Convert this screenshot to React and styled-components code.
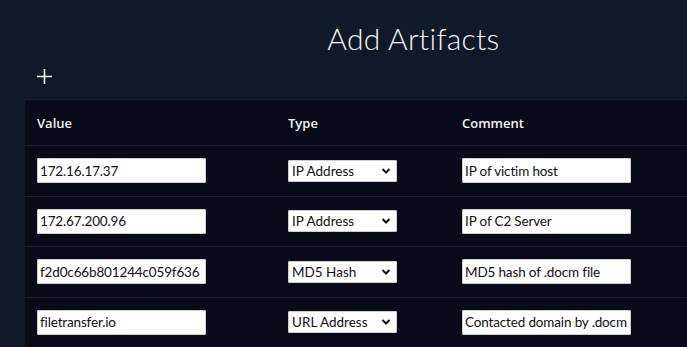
import React from 'react';
import styled, { createGlobalStyle } from 'styled-components';

const artifacts = [
  { value: '172.16.17.37', type: 'IP Address', comment: 'IP of victim host' },
  { value: '172.67.200.96', type: 'IP Address', comment: 'IP of C2 Server' },
  { value: 'f2d0c66b801244c059f636', type: 'MD5 Hash', comment: 'MD5 hash of .docm file' },
  { value: 'filetransfer.io', type: 'URL Address', comment: 'Contacted domain by .docm' },
];

const TYPES = ['IP Address', 'MD5 Hash', 'URL Address'];

const Chevron = () => (
  <svg width="10" height="8" viewBox="0 0 10 8">
    <path d="M1.5 2 L5 5.5 L8.5 2" fill="none" stroke="#111" strokeWidth="2" />
  </svg>
);

function App() {
  return (
    <>
      <Global />
      <Page>
        <Title>Add Artifacts</Title>
        <AddButton aria-label="add">
          <svg width="17" height="17" viewBox="0 0 17 17">
            <path d="M8.5 1 V16 M1 8.5 H16" stroke="#f3f4f6" strokeWidth="1.6" />
          </svg>
        </AddButton>
        <Table>
          <colgroup>
            <col style={{ width: 251 }} />
            <col style={{ width: 174 }} />
            <col />
          </colgroup>
          <thead>
            <tr>
              <Th>Value</Th>
              <Th>Type</Th>
              <Th>Comment</Th>
            </tr>
          </thead>
          <tbody>
            {artifacts.map((a, i) => (
              <Row key={i}>
                <Td><TextInput defaultValue={a.value} /></Td>
                <Td>
                  <SelectWrap>
                    <Select defaultValue={a.type}>
                      {TYPES.map(t => <option key={t}>{t}</option>)}
                    </Select>
                    <Arrow><Chevron /></Arrow>
                  </SelectWrap>
                </Td>
                <Td><TextInput defaultValue={a.comment} /></Td>
              </Row>
            ))}
          </tbody>
        </Table>
      </Page>
    </>
  );
}

export default App;

const Global = createGlobalStyle`
  html, body {
    margin: 0;
    background: #111827;
    overflow: hidden;
  }
`;

const Page = styled.div`
  width: 777px;
  padding-left: 25px;
  padding-top: 20px;
`;

const Title = styled.h1`
  margin: 0;
  text-align: center;
  font-family: Lato, "Noto Sans", sans-serif;
  font-weight: 300;
  font-size: 30px;
  line-height: 36px;
  color: #f3f4f6;
  letter-spacing: 0.3px;
`;

const AddButton = styled.button`
  display: flex;
  background: none;
  border: none;
  padding: 0;
  margin: 12px 0 0 11px;
  height: 31px;
  cursor: pointer;
`;

const Table = styled.table`
  width: 100%;
  border-collapse: collapse;
  table-layout: fixed;
  background: #080a17;
  border-top: 1px solid #1a2030;
`;

const Th = styled.th`
  text-align: left;
  padding: 0 12px;
  height: 45px;
  font-family: "Open Sans", sans-serif;
  font-weight: 600;
  font-size: 13px;
  color: #f3f4f6;
  border-bottom: 1px solid #1c2233;
`;

const Row = styled.tr`
  border-bottom: 1px solid #1c2233;
`;

const Td = styled.td`
  padding: 12px 12px 12.5px;
  vertical-align: middle;
`;

const TextInput = styled.input`
  box-sizing: border-box;
  width: 169px;
  height: 25px;
  padding: 0 2px;
  border: 1px solid #cfcfcf;
  border-radius: 1px;
  background: #fff;
  font-family: Lato, "Noto Sans", sans-serif;
  font-size: 13.5px;
  letter-spacing: -0.15px;
  color: #111;
  outline: none;
`;

const SelectWrap = styled.div`
  position: relative;
  width: 109px;
  height: 22px;
`;

const Select = styled.select`
  appearance: none;
  box-sizing: border-box;
  width: 109px;
  height: 22px;
  padding: 0 18px 0 3px;
  border: 1px solid #cfcfcf;
  border-radius: 1px;
  background: #fff;
  font-family: Lato, "Noto Sans", sans-serif;
  font-size: 13.5px;
  color: #111;
  outline: none;
`;

const Arrow = styled.span`
  position: absolute;
  right: 6px;
  top: 7px;
  display: flex;
  pointer-events: none;
`;
